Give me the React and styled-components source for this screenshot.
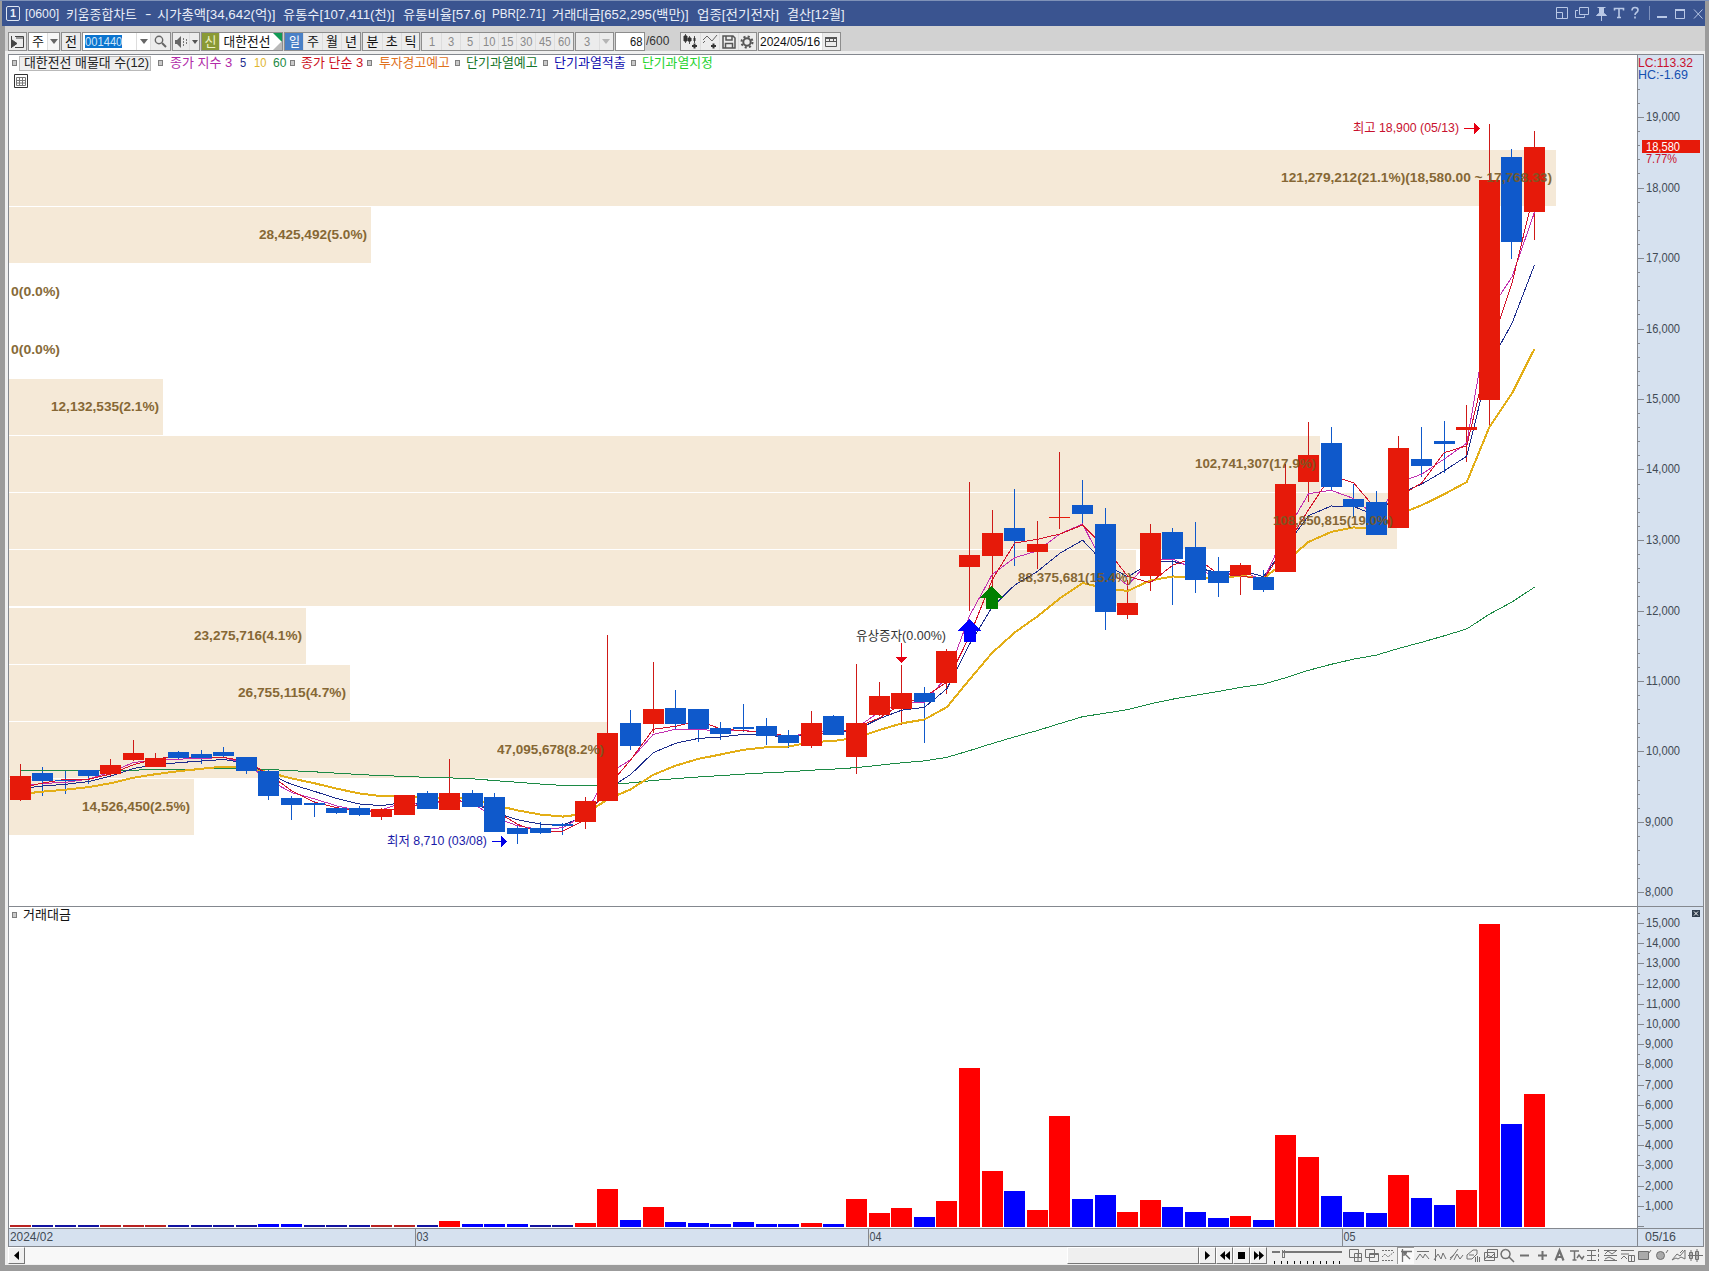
import styled, { createGlobalStyle } from "styled-components";
import { useLayoutEffect, useRef, useState } from "react"

const FONT = '"Liberation Sans", "Noto Sans CJK KR", sans-serif'

const GlobalStyle = createGlobalStyle`
    body {
        margin: 0;
        overflow: hidden;
        font-family: ${FONT};
        font-size: 13px;
    }
    * {
        box-sizing: border-box;
    }
    svg {
        display: block;
        flex: none;
    }
`

const Window = styled.div`
    display: flex;
    flex-direction: column;
    width: 1709px;
    height: 1271px;
    background: #9b9b9b;
    border-top: 1px solid #7f92b8;
    padding: 0 4px 6px 5px;
`

const TitleBar = styled.div`
    display: flex;
    align-items: center;
    height: 25px;
    margin-left: -3px;
    padding-left: 4px;
    padding-bottom: 1px;
    background: #3a5490;
    color: #e9eef8;
`

const TitleBadge = styled.div`
    width: 14px;
    height: 15px;
    margin-right: 5px;
    border: 1px solid #dfe6f3;
    border-radius: 2px;
    font-size: 11px;
    font-weight: bold;
    line-height: 13px;
    text-align: center;
`

const TitlePart = styled.div`
    flex: none;
    margin-right: ${(props) => props.$gap}px;
`

const TitleIcons = styled.div`
    margin-left: auto;
    margin-right: 2px;
`

const Body = styled.div`
    display: flex;
    flex-direction: column;
    height: 1239px;
    background: #efefef;
    padding: 0 2px 0 3px;
`

const ToolBar = styled.div`
    display: flex;
    align-items: flex-start;
    height: 25px;
    margin: 0 -2px 3px -3px;
    padding: 6px 0 0 3px;
    background: #d2d2d2;
`

const Group = styled.div`
    display: flex;
    height: 19px;
    margin-right: ${(props) => props.$gap ?? 1}px;
    border: 1px solid #8d8d8d;
    background: #ececec;
`

const Cell = styled.div`
    display: flex;
    align-items: center;
    justify-content: ${(props) => props.$align || "center"};
    width: ${(props) => props.$w}px;
    height: 17px;
    padding: 0 ${(props) => props.$pad || 0}px;
    background: ${(props) => props.$bg || "transparent"};
    color: ${(props) => props.$color || "#111"};
    line-height: 14px;
    overflow: hidden;

    & + & {
        border-left: 1px solid ${(props) => props.$line || "#a8a8a8"};
    }
`

const Selected = styled.div`
    background: #0b74cf;
    color: #cfe6fa;
    height: 13px;
    line-height: 13px;
`

const Total = styled.div`
    width: 34px;
    height: 19px;
    line-height: 18px;
    color: #333;
`

const FitBox = styled.span`
    display: block;
    flex: none;
    width: ${(props) => props.$w}px;
    white-space: pre;
    line-height: inherit;
`

const FitInner = styled.span`
    display: inline-block;
    transform-origin: 0 50%;
`

const Frame = styled.div`
    display: grid;
    grid-template-columns: 1628px 65px;
    grid-template-rows: 851px 321px 17px;
    gap: 1px;
    width: 1696px;
    height: 1193px;
    padding: 1px;
    background: #84888f;
`

const Plot = styled.div`
    position: relative;
    background: #fff;
    overflow: hidden;
`

const Scale = styled.div`
    background: #d6e1ef;
    overflow: hidden;
`

const Legend = styled.div`
    position: absolute;
    left: 0;
    top: 0;
    display: flex;
    align-items: center;
    height: 15px;
`

const LegendMark = styled.div`
    width: 5px;
    height: 6px;
    margin-top: 1px;
    margin-left: ${(props) => props.$before}px;
    margin-right: ${(props) => props.$after}px;
    border: 1px solid #7e7e7e;
    background: #c9c9c9;
`

const LegendText = styled.div`
    margin-right: ${(props) => props.$gap || 0}px;
    color: ${(props) => props.$color};
    line-height: 15px;
`

const LegendChip = styled.div`
    width: 132px;
    height: 15px;
    margin-top: 2px;
    padding-left: 4px;
    border: 1px solid #b9b9b9;
    background: #efefef;
    color: #222;
    line-height: 11px;
`

const GridButton = styled.div`
    position: absolute;
    left: 5px;
    top: 19px;
`

const BottomBar = styled.div`
    display: flex;
    height: 17px;
    width: 1696px;
`

const Track = styled.div`
    display: flex;
    justify-content: flex-end;
    width: 1174px;
    background: #f8f8f8;
`

const Thumb = styled.div`
    width: 132px;
    height: 17px;
    background: #efefef;
    border: 1px solid #fff;
    border-right-color: #777;
    border-bottom-color: #777;
`

const PushButton = styled.div`
    display: flex;
    align-items: center;
    justify-content: center;
    width: 17px;
    height: 17px;
    background: #f0f0f0;
    border: 1px solid #fff;
    border-right-color: #777;
    border-bottom-color: #777;
`

const DrawTools = styled.div`
    display: flex;
    margin-left: 3px;
`

const ToolIcon = styled.div`
    width: 17.05px;
    height: 17px;
    background: ${(props) => (props.$on ? "#fafafa" : "transparent")};
    box-shadow: ${(props) => (props.$on ? "inset 1px 1px 0 #999" : "none")};
`

// squeezes or stretches one line of text to a fixed width
function Fit({ w, children }) {
    const ref = useRef(null)
    const [ratio, setRatio] = useState(1)

    useLayoutEffect(() => {
        setRatio(w / ref.current.offsetWidth)
    }, [w, children])

    return (
        <FitBox $w={w}>
            <FitInner ref={ref} style={{ transform: `scaleX(${ratio})` }}>{children}</FitInner>
        </FitBox>
    )
}

// y is the vertical middle of the line
function Label({ x, y, w, color, bold, opacity, children }) {
    return (
        <text x={x} y={y + 4.5} fill={color} fontSize="13" fontWeight={bold ? 700 : 400} opacity={opacity}
            textLength={w} lengthAdjust="spacingAndGlyphs" fontFamily={FONT}>{children}</text>
    )
}

const RED = "#e61a0a"
const BLUE = "#0f59cb"

// direction, body top, body bottom, high, low, top of the turnover bar
const candles = [
    ["R", 776, 800, 764, 801, 1225], ["B", 773, 781, 767, 796, 1225], ["B", 780, 781, 770, 794, 1225],
    ["B", 770, 776, 770, 784, 1225], ["R", 765, 774, 759, 776, 1225], ["R", 753, 760, 740, 761, 1225],
    ["R", 758, 767, 753, 767, 1225], ["B", 752, 758, 751, 759, 1225], ["B", 754, 758, 750, 764, 1225],
    ["B", 752, 756, 747, 757, 1225], ["B", 757, 771, 757, 774, 1225], ["B", 771, 796, 770, 800, 1224],
    ["B", 798, 805, 796, 820, 1224], ["B", 803, 805, 801, 817, 1225], ["B", 808, 813, 807, 814, 1225],
    ["B", 808, 815, 806, 816, 1225], ["R", 809, 817, 808, 820, 1225], ["R", 795, 815, 795, 815, 1225],
    ["B", 793, 809, 791, 809, 1225], ["R", 793, 810, 759, 810, 1221], ["B", 793, 807, 790, 807, 1224],
    ["B", 797, 832, 793, 832, 1224], ["B", 828, 834, 824, 844, 1224], ["B", 828, 833, 822, 834, 1225],
    ["B", 824, 826, 823, 835, 1225], ["R", 801, 822, 797, 829, 1223], ["R", 733, 801, 635, 801, 1189],
    ["B", 723, 746, 710, 750, 1220], ["R", 709, 724, 662, 733, 1207], ["B", 708, 724, 690, 729, 1222],
    ["B", 709, 729, 709, 742, 1223], ["B", 728, 734, 722, 740, 1224], ["B", 727, 729, 704, 732, 1222],
    ["B", 726, 736, 718, 745, 1224], ["B", 735, 743, 730, 748, 1224], ["R", 723, 746, 711, 748, 1223],
    ["B", 716, 735, 715, 735, 1224], ["R", 723, 757, 664, 774, 1199], ["R", 696, 715, 682, 716, 1213],
    ["R", 693, 709, 665, 725, 1208], ["B", 693, 702, 687, 743, 1217], ["R", 651, 683, 649, 694, 1201],
    ["R", 555, 567, 482, 611, 1068], ["R", 533, 556, 510, 588, 1171], ["B", 528, 541, 489, 566, 1191],
    ["R", 544, 552, 521, 569, 1210], ["R", 517, 518, 452, 529, 1116], ["B", 505, 514, 480, 525, 1199],
    ["B", 524, 612, 508, 630, 1195], ["R", 603, 615, 580, 619, 1212], ["R", 533, 576, 524, 591, 1200],
    ["B", 532, 559, 528, 605, 1207], ["B", 547, 580, 522, 593, 1212], ["B", 571, 583, 557, 597, 1218],
    ["R", 565, 575, 563, 595, 1216], ["B", 577, 590, 570, 592, 1220], ["R", 484, 572, 464, 572, 1135],
    ["R", 455, 482, 422, 502, 1157], ["B", 443, 487, 427, 490, 1196], ["B", 499, 507, 484, 517, 1212],
    ["B", 502, 535, 491, 535, 1213], ["R", 448, 528, 436, 528, 1175], ["B", 459, 466, 427, 477, 1198],
    ["B", 441, 444, 421, 473, 1205], ["R", 427, 430, 405, 462, 1190], ["R", 180, 400, 124, 425, 924],
    ["B", 157, 242, 149, 259, 1124], ["R", 147, 212, 131, 240, 1094],
]

const centerX = (i) => 20.4 + 22.6 * i
const bodyX = (i) => Math.round(centerX(i) - 10.6)
const closes = candles.map(([dir, top, bottom]) => (dir === "R" ? top : bottom))

function ema(period, seed) {
    const k = 2 / (period + 1)
    const out = [seed]
    for (let i = 1; i < closes.length; i++) {
        out.push(closes[i] * k + out[i - 1] * (1 - k))
    }
    return out
}

function sma3() {
    const all = [796, 792, ...closes]
    return closes.map((_, i) => (all[i] + all[i + 1] + all[i + 2]) / 3)
}

const averages = [
    { color: "#1c8a45", width: 1, values: ema(60, 770) },
    { color: "#e3ae17", width: 2, values: ema(10, 794) },
    { color: "#1c2c8c", width: 1, values: ema(5, 788.5) },
    { color: "#c22fb0", width: 1, values: ema(3, 786) },
    { color: "#d3132b", width: 1, values: sma3() },
]

// top, height, right edge, label left, label width, text
const profile = [
    [150, 56, 1556, 1281, 271, "121,279,212(21.1%)(18,580.00 ~ 17,768.33)"],
    [207, 56, 371, 259, 108, "28,425,492(5.0%)"],
    [264, 0, 9, 11, 49, "0(0.0%)"],
    [322, 0, 9, 11, 49, "0(0.0%)"],
    [379, 56, 163, 51, 108, "12,132,535(2.1%)"],
    [436, 56, 1320, 1195, 121, "102,741,307(17.9%)"],
    [493, 56, 1397, 1273, 120, "108,850,815(19.0%)"],
    [550, 56, 1136, 1018, 114, "88,375,681(15.4%)"],
    [608, 56, 306, 194, 108, "23,275,716(4.1%)"],
    [665, 56, 350, 238, 108, "26,755,115(4.7%)"],
    [722, 56, 607, 497, 107, "47,095,678(8.2%)"],
    [779, 56, 194, 82, 108, "14,526,450(2.5%)"],
]

function points(values) {
    return values.map((v, i) => `${centerX(i).toFixed(1)},${v.toFixed(1)}`).join(" ")
}

function PriceChart() {
    return (
        <svg width="1628" height="851" viewBox="9 55 1628 851">
            <g shapeRendering="crispEdges">
                {profile.map(([top, h, right], i) => <rect key={i} x="9" y={top} width={right - 9} height={h} fill="#f5e9d7" />)}
                {candles.map(([dir, , , high, low], i) =>
                    <rect key={i} x={Math.floor(centerX(i) - 0.2)} y={high} width="1" height={low - high} fill={dir === "R" ? "#cf1a17" : BLUE} />
                )}
                {averages.map((line) =>
                    <polyline key={line.color} points={points(line.values)} fill="none" stroke={line.color} strokeWidth={line.width} />
                )}
                {candles.map(([dir, top, bottom], i) =>
                    <rect key={i} x={bodyX(i)} y={top} width="21" height={bottom - top} fill={dir === "R" ? RED : BLUE} />
                )}
                <path d="M969.500 619l12 12h-6v11h-12v-11h-6z" fill="#0000ff" />
                <path d="M991.500 586l12 12h-6v11h-12v-11h-6z" fill="#008000" />
                <path d="M1464 128h10v-5l6 5.500-6 5.500v-5h-10z" fill="#e60012" />
                <path d="M492 841h9v-5l6 5.500-6 5.500v-5h-9z" fill="#0000e6" />
                <path d="M901 643h1v14h5l-5.500 6-5.500-6h5z" fill="#e60012" />
            </g>
            {profile.map(([top, , , x, w, text]) =>
                <Label key={top} x={x} y={top + 27} w={w} color="#7a5a24" bold opacity="0.9">{text}</Label>
            )}
            <Label x={1353} y={127} w={106} color="#c8102e">최고 18,900 (05/13)</Label>
            <Label x={387} y={840} w={100} color="#1a1aa8">최저 8,710 (03/08)</Label>
            <Label x={856} y={635} w={90} color="#333">유상증자(0.00%)</Label>
        </svg>
    )
}

function PriceScale() {
    const ticks = []
    for (let price = 8000; price <= 19400; price += 200) {
        ticks.push({ price, y: Math.round(117 + (19000 - price) * 0.0705) })
    }
    return (
        <svg width="65" height="851" viewBox="1638 55 65 851">
            {ticks.map(({ price, y }) =>
                <rect key={price} x="1638" y={y} width={price % 1000 ? 2 : 6} height="1" fill="#84888f" />
            )}
            {ticks.filter(({ price }) => price % 1000 === 0).map(({ price, y }) =>
                <Label key={price} x={price < 10000 ? 1645 : 1646} y={y - 0.5} w={price < 10000 ? 28 : 34} color="#414a54">{price.toLocaleString("en-US")}</Label>
            )}
            <Label x={1638} y={62} w={55} color="#c8102e">LC:113.32</Label>
            <Label x={1638} y={74} w={50} color="#1450b0">HC:-1.69</Label>
            <rect x="1642" y="140" width="58" height="13" fill={RED} />
            <Label x={1646} y={146} w={34} color="#fff">18,580</Label>
            <Label x={1646} y={158.500} w={31} color="#c8102e">7.77%</Label>
        </svg>
    )
}

function barColor(dir, top) {
    if (top >= 1225) return dir === "R" ? "#b82222" : "#1212a0"
    return dir === "R" ? "#ff0000" : "#0000ff"
}

function ValueChart() {
    return (
        <svg width="1628" height="321" viewBox="9 907 1628 321" shapeRendering="crispEdges">
            {candles.map(([dir, , , , , top], i) =>
                <rect key={i} x={bodyX(i)} y={top} width="21" height={1227 - top} fill={barColor(dir, top)} />
            )}
        </svg>
    )
}

function ValueScale() {
    const ticks = []
    for (let value = 0; value <= 15500; value += 500) {
        ticks.push({ value, y: Math.round(1226 - value * 0.0202) })
    }
    return (
        <svg width="65" height="321" viewBox="1638 907 65 321">
            {ticks.map(({ value, y }) =>
                <rect key={value} x="1638" y={y} width={value % 1000 ? 2 : 6} height="1" fill="#84888f" />
            )}
            {ticks.filter(({ value }) => value && value % 1000 === 0).map(({ value, y }) =>
                <Label key={value} x={value < 10000 ? 1645 : 1646} y={y - 0.5} w={value < 10000 ? 28 : 34} color="#414a54">{value.toLocaleString("en-US")}</Label>
            )}
            <rect x="1692" y="910" width="8" height="7" fill="#2f3d4d" />
            <path d="M1694 911.500l4 4m0-4l-4 4" stroke="#fff" />
        </svg>
    )
}

function DateScale() {
    return (
        <svg width="1628" height="17" viewBox="9 1229 1628 17">
            <rect x="9" y="1229" width="1628" height="17" fill="#d6e1ef" />
            {[415, 868, 1342].map((x) => <rect key={x} x={x} y="1229" width="1" height="17" fill="#84888f" />)}
            <Label x={10} y={1236} w={43} color="#414a54">2024/02</Label>
            <Label x={416.500} y={1236} w={12} color="#414a54">03</Label>
            <Label x={869.500} y={1236} w={12} color="#414a54">04</Label>
            <Label x={1343.500} y={1236} w={12} color="#414a54">05</Label>
        </svg>
    )
}

const titleParts = [
    ["[0600]", 34, 7], ["키움종합차트", 71, 8], ["-", 6, 6], ["시가총액[34,642(억)]", 118, 8],
    ["유통수[107,411(천)]", 112, 8], ["유통비율[57.6]", 82, 7], ["PBR[2.71]", 53, 7],
    ["거래대금[652,295(백만)]", 137, 8], ["업종[전기전자]", 82, 8], ["결산[12월]", 58, 0],
]

function Title() {
    return (
        <TitleBar>
            <TitleBadge>1</TitleBadge>
            {titleParts.map(([text, w, gap]) =>
                <TitlePart key={text} $gap={gap}><Fit w={w}>{text}</Fit></TitlePart>
            )}
            <TitleIcons>
                <svg width="148" height="20" viewBox="1555 3 148 20" fill="none" stroke="#b9c8e6">
                    <path d="M1556.500 7.500h11v11h-11zM1556.500 12.500h6v6" />
                    <path d="M1579.500 7.500h9v7h-9zM1578 10.500h-2.500v7h9v-2" />
                    <path d="M1597.500 7.500h8M1599.500 8v5l-3 2.500h10l-3-2.500V8zM1601.500 15v6" fill="#b9c8e6" />
                    <path d="M1614.500 10.500v-2h9v2M1619 8.500v9M1617 17.500h4" strokeWidth="1.6" />
                    <path d="M1632 10.500q0-3 3-3t3 2.500q0 1.500-1.500 2.500t-1.500 2.500M1635 16.500v2" strokeWidth="1.6" />
                    <path d="M1649.500 6v14" stroke="#7f92bd" />
                    <path d="M1657 17h10" strokeWidth="2" />
                    <path d="M1675.500 9.500h9v9h-9zM1675 10h10" />
                    <path d="M1675 10h10" strokeWidth="2" />
                    <path d="M1694 9.500l8.500 9m0-9l-8.500 9" />
                </svg>
            </TitleIcons>
        </TitleBar>
    )
}

function Arrow({ color = "#666" }) {
    return <svg width="8" height="5"><path d="M0 0h8l-4 5z" fill={color} /></svg>
}

function Tools() {
    return (
        <ToolBar>
            <Group>
                <Cell $w={17}>
                    <svg width="15" height="14" fill="none" stroke="#444">
                        <path d="M5 1.500h8.500v11H5M6 3h7M1.500 1v12" /><path d="M2 5l5 3.500-5 3.500z" fill="#444" />
                    </svg>
                </Cell>
            </Group>
            <Group>
                <Cell $w={18} $bg="#fff"><Fit w={12}>주</Fit></Cell>
                <Cell $w={12} $bg="#f7f7f7" $line="#eee"><Arrow /></Cell>
            </Group>
            <Group>
                <Cell $w={18}><Fit w={12}>전</Fit></Cell>
            </Group>
            <Group>
                <Cell $w={53} $bg="#fff" $align="flex-start" $pad={2}><Selected><Fit w={37}>001440</Fit></Selected></Cell>
                <Cell $w={14} $bg="#fff"><Arrow /></Cell>
                <Cell $w={20}>
                    <svg width="13" height="13" fill="none" stroke="#666" strokeWidth="1.4"><circle cx="5" cy="5" r="3.700" /><path d="M8 8l4 4" strokeWidth="2" /></svg>
                </Cell>
            </Group>
            <Group>
                <Cell $w={16}>
                    <svg width="14" height="12"><path d="M1 4h2l4-4v12L3 8H1z" fill="#666" /><path d="M9.500 2v8M12.500 3v6" stroke="#777" strokeDasharray="2 1" /></svg>
                </Cell>
                <Cell $w={10}><svg width="6" height="4"><path d="M0 0h6l-3 4z" fill="#555" /></svg></Cell>
            </Group>
            <Group>
                <Cell $w={17} $bg="#8a9a35" $color="#eef3c8"><Fit w={12}>신</Fit></Cell>
                <Cell $w={63} $bg="#fff" $align="flex-start" $line="#fff">
                    <Fit w={50}>{" 대한전선"}</Fit>
                    <svg width="12" height="17"><path d="M3 0h9v9z" fill="#119a55" /><path d="M12 8v9H3z" fill="#b9b9b9" /></svg>
                </Cell>
            </Group>
            <Group>
                <Cell $w={18} $bg="#4a80c6" $color="#fff"><Fit w={11}>일</Fit></Cell>
                {["주", "월", "년"].map((t) => <Cell key={t} $w={19}><Fit w={12}>{t}</Fit></Cell>)}
            </Group>
            <Group>
                {["분", "초", "틱"].map((t) => <Cell key={t} $w={18.800}><Fit w={12}>{t}</Fit></Cell>)}
            </Group>
            <Group>
                {["1", "3", "5", "10", "15", "30", "45", "60"].map((t) =>
                    <Cell key={t} $w={18.800} $color="#8a8a8a"><Fit w={t.length * 6}>{t}</Fit></Cell>
                )}
            </Group>
            <Group>
                <Cell $w={23} $color="#8a8a8a"><Fit w={6}>3</Fit></Cell>
                <Cell $w={14}><Arrow color="#b5b5b5" /></Cell>
            </Group>
            <Group>
                <Cell $w={28} $bg="#fff" $align="flex-end" $pad={2}><Fit w={12}>68</Fit></Cell>
            </Group>
            <Total><Fit w={23}>/600</Fit></Total>
            <Group>
                <Cell $w={19}>
                    <svg width="16" height="15" stroke="#333"><path d="M3.500 0v9M7.500 2v8M12.500 2v7" stroke="#555" /><path d="M2 2h3v5H2zM6 4h3v3H6zM12 4h1v3h-1z" fill="#333" /><path d="M10 12h5M12.500 9.500v5" strokeWidth="2" /></svg>
                </Cell>
                <Cell $w={19}>
                    <svg width="16" height="15" fill="none" stroke="#666"><path d="M1 6l4-4 5 5 5-6M1 9l2-2" /><path d="M9 12h5M11.500 9.500v5" stroke="#333" strokeWidth="2" /></svg>
                </Cell>
                <Cell $w={19}>
                    <svg width="14" height="14" fill="none" stroke="#555" strokeWidth="1.500"><path d="M1 1h10l2 2v10H1zM4 1v4h6V1M3.500 13V8.500h7V13" /></svg>
                </Cell>
                <Cell $w={18}>
                    <svg width="14" height="14" fill="none" stroke="#555"><circle cx="7" cy="7" r="3.700" strokeWidth="2" /><circle cx="7" cy="7" r="5.500" strokeWidth="2" strokeDasharray="2.100 2.220" /></svg>
                </Cell>
            </Group>
            <Group>
                <Cell $w={63} $bg="#fff"><Fit w={60}>2024/05/16</Fit></Cell>
                <Cell $w={18} $line="#ddd">
                    <svg width="12" height="12" fill="none" stroke="#555"><path d="M.5 1.500h11v9H.5zM4.500 3v3M8.500 3v3M1 5.500h10" /><path d="M0 2h12" strokeWidth="2" /></svg>
                </Cell>
            </Group>
        </ToolBar>
    )
}

const legendItems = [
    ["투자경고예고", "#e0711c", 4, 7, 71], ["단기과열예고", "#16752a", 5, 6, 72],
    ["단기과열적출", "#1010b0", 5, 6, 72], ["단기과열지정", "#25d32e", 5, 6, 71],
]

function PriceLegend() {
    return (
        <Legend>
            <LegendMark $before={3} $after={2} />
            <LegendChip><Fit w={125}>대한전선 매물대 수(12)</Fit></LegendChip>
            <LegendMark $before={7} $after={7} />
            <LegendText $color="#b12aa8" $gap={8}><Fit w={62}>종가 지수 3</Fit></LegendText>
            <LegendText $color="#1c2c8c" $gap={8}><Fit w={6}>5</Fit></LegendText>
            <LegendText $color="#e0b52c" $gap={7}><Fit w={12}>10</Fit></LegendText>
            <LegendText $color="#1c8a45"><Fit w={13}>60</Fit></LegendText>
            <LegendMark $before={4} $after={6} />
            <LegendText $color="#cc1020"><Fit w={62}>종가 단순 3</Fit></LegendText>
            {legendItems.map(([text, color, before, after, w]) => [
                <LegendMark key={text + "mark"} $before={before} $after={after} />,
                <LegendText key={text} $color={color}><Fit w={w}>{text}</Fit></LegendText>,
            ])}
        </Legend>
    )
}

const drawIcons = [
    <path d="M3.500 2.500h9v8h-9zM8.500 6.500h7v8h-7zM12 7v7M9 10.500h6" />,
    <path d="M2.500 2.500h9v8h-9zM6.500 6.500h9v8h-9zM7 7.500h8" />,
    <path d="M2 3.500h12M2 13.500h12M2 10l3-3 3 3 6-5" strokeDasharray="2 1" />,
    <path d="M4 4.500h11M5.500 2v13M6 5l7 7M7 9V6h3" strokeWidth="1.300" />,
    <path d="M3 4.500h12M2 13l4-6 3 4 2-4 4 5" />,
    <path d="M4.500 2v12M3 13l4-6 3 5 2-6 3 6" />,
    <path d="M2 13l8-11M6 13l3-6 3 5 3-4M2 11l4-3" />,
    <path d="M2 8l6-5h4v4l-5 5H2zM4 8h5M10.500 10v5M12.500 9v6M14.500 10v5" />,
    <path d="M5.500 2.500h10v8h-10zM2.500 5.500h10v8h-10zM3 12l3-4 3 2 4-4" />,
    <path d="M6.500 2.500a4.500 4.500 0 1 0 .1 0M10 10l5 5" strokeWidth="1.500" />,
    <path d="M4 8.500h9" strokeWidth="2" />,
    <path d="M4 8.500h9M8.500 4v9" strokeWidth="2" />,
    <path d="M4.500 13.500l4-10 4 10M6 10h5" strokeWidth="2.200" />,
    <path d="M2 4h9M6.500 4v9M4.500 13h4M9 11l2-3 3 4 2-3" strokeWidth="1.500" />,
    <path d="M2 3.500h9M2 8.500h9M2 13.500h9M6.500 3v10M13.500 2v3M13.500 7v3M13.500 12v2" />,
    <path d="M2 3.500h13M2 8.500h13M2 13.500h13M3 7l3-3 4 3 4-3M3 12l4-2 6 3" />,
    <path d="M2 3.500h13M2 7h8M2 12l3-3 3 3M9.500 8.500h6v6h-6zM12.500 9v5" />,
    <path d="M2.500 4.500h10v8h-10zM13 6l2-3" fill="#aaa" />,
    <path d="M3.500 8.500a4 4 0 1 0 8 0a4 4 0 1 0-8 0M13 6l2-3" fill="#aaa" />,
    <path d="M2 13l5-6 3 2 5-6v9l-4-2-3 2-2-1zM10 6l3-3" />,
    <path d="M2.500 5.500h3v6h-3zM8.500 4.500h3v8h-3zM4 3v11M10 2v13M1 8.500h15" />,
]

function Bottom() {
    return (
        <BottomBar>
            <PushButton><svg width="5" height="9"><path d="M5 0v9L0 4.500z" /></svg></PushButton>
            <Track><Thumb /></Track>
            <PushButton><svg width="5" height="9"><path d="M0 0v9l5-4.500z" /></svg></PushButton>
            <PushButton><svg width="10" height="9"><path d="M5 0v9L0 4.500zM10 0v9L5 4.500z" /></svg></PushButton>
            <PushButton><svg width="7" height="7"><path d="M0 0h7v7H0z" /></svg></PushButton>
            <PushButton><svg width="10" height="9"><path d="M0 0v9l5-4.500zM5 0v9l5-4.500z" /></svg></PushButton>
            <svg width="76" height="17" fill="none" stroke="#777" shapeRendering="crispEdges">
                <path d="M5 5h8M16 5h59" strokeWidth="2" />
                <path d="M15.500 2.500v8h1.500v-8" />
                {Array.from({ length: 11 }, (_, i) => <path key={i} d={`M${7.500 + Math.round(i * 6.500)} 14v3`} stroke="#111" />)}
            </svg>
            <DrawTools>
                {drawIcons.map((icon, i) =>
                    <ToolIcon key={i} $on={i === 3}>
                        <svg width="17" height="17" fill="none" stroke="#707070">{icon}</svg>
                    </ToolIcon>
                )}
            </DrawTools>
        </BottomBar>
    )
}

function App() {
    return (
        <Window>
            <GlobalStyle />
            <Title />
            <Body>
                <Tools />
                <Frame>
                    <Plot>
                        <PriceChart />
                        <PriceLegend />
                        <GridButton>
                            <svg width="14" height="14" fill="none" stroke="#333">
                                <path d="M.5.5h13v13H.5z" /><path d="M2.500 3.500h9v8h-9zM5.500 3v9M8.500 3v9M2 6.500h10M2 9h10" stroke="#777" />
                            </svg>
                        </GridButton>
                    </Plot>
                    <Scale><PriceScale /></Scale>
                    <Plot>
                        <ValueChart />
                        <Legend>
                            <LegendMark $before={3} $after={6} />
                            <LegendText $color="#111"><Fit w={48}>거래대금</Fit></LegendText>
                        </Legend>
                    </Plot>
                    <Scale><ValueScale /></Scale>
                    <DateScale />
                    <Scale>
                        <svg width="65" height="17" viewBox="1638 1229 65 17">
                            <Label x={1645} y={1236} w={31} color="#414a54">05/16</Label>
                        </svg>
                    </Scale>
                </Frame>
                <Bottom />
            </Body>
        </Window>
    )
}

export default App
